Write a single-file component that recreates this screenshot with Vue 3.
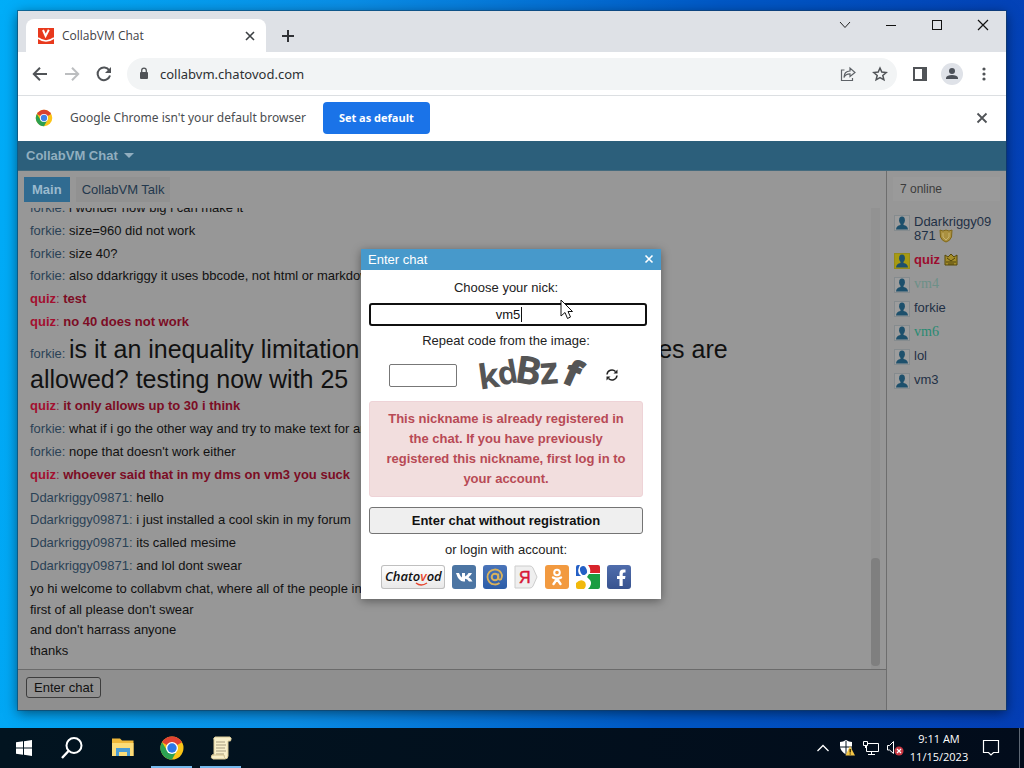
<script setup>
import { ref } from 'vue'

const nick = ref('vm5')
const code = ref('')

const messages = [
  { from: 'forkie', text: 'i wonder how big i can make it' },
  { from: 'forkie', text: 'size=960 did not work' },
  { from: 'forkie', text: 'size 40?' },
  { from: 'forkie', text: 'also ddarkriggy it uses bbcode, not html or markdown' },
  { from: 'quiz', text: 'test', red: true },
  { from: 'quiz', text: 'no 40 does not work', red: true },
  { from: 'forkie', text: 'is it an inequality limitation, or only some other big sizes are allowed? testing now with 25', big: true },
  { from: 'quiz', text: 'it only allows up to 30 i think', red: true },
  { from: 'forkie', text: 'what if i go the other way and try to make text for ants' },
  { from: 'forkie', text: "nope that doesn't work either" },
  { from: 'quiz', text: 'whoever said that in my dms on vm3 you suck', red: true },
  { from: 'Ddarkriggy09871', text: 'hello' },
  { from: 'Ddarkriggy09871', text: 'i just installed a cool skin in my forum' },
  { from: 'Ddarkriggy09871', text: 'its called mesime' },
  { from: 'Ddarkriggy09871', text: 'and lol dont swear' }
]

const notice = [
  'yo hi welcome to collabvm chat, where all of the people in',
  "first of all please don't swear",
  "and don't harrass anyone",
  'thanks'
]

const users = [
  { name: 'Ddarkriggy09871', badge: 'shield' },
  { name: 'quiz', kind: 'owner', badge: 'crown' },
  { name: 'vm4', kind: 'faint' },
  { name: 'forkie' },
  { name: 'vm6', kind: 'teal' },
  { name: 'lol' },
  { name: 'vm3' }
]
</script>

<template>
  <div class="screen">
    <main class="desktop">
      <section class="window">
        <header class="tabstrip">
          <div class="tab">
            <svg class="favicon" width="16" height="16" viewBox="0 0 16 16">
              <rect width="16" height="16" fill="#e8391d" />
              <path d="M5 2L7.600 8L10.800 1.800" fill="none" stroke="#fff" stroke-width="2" />
              <path d="M0 10Q8 16 16 10" fill="none" stroke="#fff" stroke-width="1.700" />
            </svg>
            <span class="tab-title">CollabVM Chat</span>
            <button class="plain tab-close" aria-label="Close tab">
              <svg width="10" height="10" viewBox="0 0 10 10"><path d="M1 1L9 9M9 1L1 9" stroke="#3c4043" stroke-width="1.600" /></svg>
            </button>
          </div>
          <button class="plain new-tab" aria-label="New tab">
            <svg width="14" height="14" viewBox="0 0 14 14"><path d="M7 1V13M1 7H13" stroke="#303236" stroke-width="2" /></svg>
          </button>
          <div class="controls">
            <button class="plain" aria-label="Search tabs"><svg width="12" height="12" viewBox="0 0 12 12"><path d="M1 3L6 8.500L11 3" fill="none" stroke="#222" /></svg></button>
            <button class="plain" aria-label="Minimize"><svg width="12" height="12" viewBox="0 0 12 12"><path d="M1 6.500H11" stroke="#111" /></svg></button>
            <button class="plain" aria-label="Maximize"><svg width="12" height="12" viewBox="0 0 12 12"><rect x="1.500" y="1.500" width="9" height="9" fill="none" stroke="#111" /></svg></button>
            <button class="plain" aria-label="Close"><svg width="12" height="12" viewBox="0 0 12 12"><path d="M1 1L11 11M11 1L1 11" stroke="#111" stroke-width="1.200" /></svg></button>
          </div>
        </header>

        <nav class="toolbar">
          <button class="plain tool" aria-label="Back"><svg width="16" height="16" viewBox="0 0 16 16"><path d="M15 8H2M8 1.800L1.800 8L8 14.200" fill="none" stroke="#505357" stroke-width="2" /></svg></button>
          <button class="plain tool" aria-label="Forward"><svg width="16" height="16" viewBox="0 0 16 16"><path d="M1 8H14M8 1.800L14.200 8L8 14.200" fill="none" stroke="#bcbec0" stroke-width="2" /></svg></button>
          <button class="plain tool" aria-label="Reload"><svg width="16" height="16" viewBox="0 0 16 16"><path d="M13.300 4.500A6.300 6.300 0 1 0 14 9.500" fill="none" stroke="#505357" stroke-width="2" /><path d="M15 1V7H9Z" fill="#505357" /></svg></button>
          <div class="omnibox">
            <svg class="lock" width="12" height="14" viewBox="0 0 12 14"><rect x="2" y="5" width="8" height="7" rx="1" fill="#505357" /><path d="M3.700 5V3.500a2.300 2.300 0 0 1 4.600 0V5" fill="none" stroke="#505357" stroke-width="1.300" /></svg>
            <input class="url" aria-label="Address" value="collabvm.chatovod.com">
            <button class="plain tool" aria-label="Share"><svg width="16" height="16" viewBox="0 0 16 16"><path d="M4.500 4H1.500V14.500H12.500V12" fill="none" stroke="#5f6368" stroke-width="1.200" /><path d="M4 11.500C4 7.500 6 5 10 5V2L15 6.500L10 10.500V7.800C7 7.800 5 9 4 11.500Z" fill="none" stroke="#5f6368" stroke-width="1.200" /></svg></button>
            <button class="plain tool" aria-label="Bookmark"><svg width="16" height="16" viewBox="0 0 16 16"><path d="M8 2L9.800 6.100L14.200 6.500L10.800 9.400L11.900 13.800L8 11.500L4.100 13.800L5.200 9.400L1.800 6.500L6.200 6.100Z" fill="none" stroke="#505357" stroke-width="1.500" /></svg></button>
          </div>
          <button class="plain tool" aria-label="Side panel"><svg width="16" height="16" viewBox="0 0 16 16"><path d="M1 1H15V15H1ZM3 3V13H10V3Z" fill="#505357" fill-rule="evenodd" /></svg></button>
          <button class="plain tool" aria-label="Profile"><svg width="24" height="24" viewBox="0 0 24 24"><circle cx="12" cy="12" r="11" fill="#dfe2e8" /><circle cx="12" cy="9" r="3" fill="#4b5058" /><path d="M6 17V15.500Q7 13 12 13T18 15.500V17Z" fill="#4b5058" /></svg></button>
          <button class="plain tool" aria-label="Menu"><svg width="16" height="16" viewBox="0 0 16 16" fill="#505357"><circle cx="8" cy="3" r="1.600" /><circle cx="8" cy="8" r="1.600" /><circle cx="8" cy="13" r="1.600" /></svg></button>
        </nav>

        <div class="infobar">
          <svg width="18" height="18" viewBox="0 0 24 24">
            <circle cx="12" cy="12" r="11" fill="#fbc417" />
            <path d="M12 12L2.500 6.500A11 11 0 0 1 21.500 6.500Z" fill="#d9412f" />
            <path d="M2.500 6.500A11 11 0 0 0 12 23L16.500 14.500L12 12L7.500 14.500Z" fill="#2c9f50" />
            <circle cx="12" cy="12" r="5.400" fill="#fff" /><circle cx="12" cy="12" r="4.200" fill="#4181e8" />
          </svg>
          <span class="info-text">Google Chrome isn't your default browser</span>
          <button class="default-btn">Set as default</button>
          <button class="plain tool info-close" aria-label="Dismiss"><svg width="12" height="12" viewBox="0 0 12 12"><path d="M1.500 1.500L10.500 10.500M10.500 1.500L1.500 10.500" stroke="#505357" stroke-width="1.800" /></svg></button>
        </div>

        <div class="page">
          <header class="page-head">
            <button class="plain room-menu">CollabVM Chat
              <svg width="10" height="6" viewBox="0 0 10 6"><path d="M0 0H10L5 5Z" fill="#91aebf" /></svg>
            </button>
          </header>
          <div class="page-body">
            <section class="chat">
              <div class="rooms">
                <button class="room active">Main</button>
                <button class="room">CollabVM Talk</button>
              </div>
              <div class="log">
                <div class="lines">
                  <p v-for="(m, i) in messages" :key="i" :class="{ red: m.red }">
                    <a href="#" class="nick">{{ m.from }}</a><span class="colon">: </span><span :class="{ big: m.big }">{{ m.text }}</span>
                  </p>
                  <p><template v-for="(line, i) in notice" :key="i"><br v-if="i">{{ line }}</template></p>
                </div>
                <div class="track"><div class="thumb"></div></div>
              </div>
              <footer class="entry"><button class="enter-btn">Enter chat</button></footer>
            </section>
            <aside class="people">
              <div class="online">7 online</div>
              <ul>
                <li v-for="u in users" :key="u.name" :class="u.kind">
                  <svg class="avatar" width="16" height="16" viewBox="0 0 16 16">
                    <rect class="frame" x="0.500" y="0.500" width="15" height="15" />
                    <ellipse cx="8" cy="5.300" rx="2.900" ry="3.700" fill="#1d506c" />
                    <path d="M2 14.500Q2.300 10.700 6.500 10V8H9.500V10Q13.700 10.700 14 14.500Z" fill="#1d506c" />
                  </svg>
                  <a href="#" class="user-name">{{ u.name }}
                    <svg v-if="u.badge === 'shield'" class="badge" width="14" height="14" viewBox="0 0 14 14"><path d="M1 1Q4 3 7 1Q10 3 13 1L12.500 8Q11 12 7 13Q3 12 1.500 8Z" fill="#aa9040" stroke="#806718" /><path d="M4 4V8L7 11L10 8V4" fill="none" stroke="#c7b26d" /></svg>
                    <svg v-if="u.badge === 'crown'" class="badge" width="14" height="14" viewBox="0 0 14 14"><path d="M1 2L4 4L7 1L10 4L13 2V12H1Z" fill="#a48d2b" stroke="#574909" /><path d="M2 9H12M3 5L7 8L11 5M4 11H10" stroke="#4f430c" fill="none" /></svg>
                  </a>
                </li>
              </ul>
            </aside>
          </div>

          <div class="overlay">
            <form class="dialog" @submit.prevent>
              <header class="dialog-head">
                <span>Enter chat</span>
                <button type="button" class="plain dialog-close" aria-label="Close dialog"><svg width="10" height="10" viewBox="0 0 10 10"><path d="M1.500 1.500L8.500 8.500M8.500 1.500L1.500 8.500" stroke="#fff" stroke-width="1.600" /></svg></button>
              </header>
              <div class="dialog-body">
                <label class="caption" for="nick">Choose your nick:</label>
                <div class="nick-wrap">
                  <input id="nick" v-model="nick" class="nick-input" autocomplete="off">
                  <span class="caret"></span>
                </div>
                <label class="caption code-caption" for="code">Repeat code from the image:</label>
                <div class="captcha">
                  <input id="code" v-model="code" class="code-input" autocomplete="off">
                  <svg class="captcha-image" width="116" height="38" viewBox="0 0 116 38" role="img" aria-label="Code image">
                    <g fill="#555" stroke="#555" font-family="Open Sans, sans-serif" font-weight="700">
                      <text x="4" y="33" font-size="34" stroke-width="0" transform="rotate(-8 8 33)">k</text>
                      <text x="22" y="28" font-size="32" stroke-width="0" transform="rotate(-10 31 20)">d</text>
                      <text x="39" y="28" font-size="39" stroke-width="0" transform="rotate(9 51 18)">B</text>
                      <text x="64" y="28" font-size="38" stroke-width="0" transform="rotate(-4 72 20)">z</text>
                      <text x="89" y="30" font-size="34" stroke-width="2" transform="rotate(24 98 20)">f</text>
                    </g>
                  </svg>
                  <button type="button" class="plain refresh" aria-label="New image">
                    <svg width="14" height="14" viewBox="0 0 14 14"><path d="M2 6.500A5 5 0 0 1 10.500 3.500M12 7.500A5 5 0 0 1 3.500 10.500" fill="none" stroke="#222" stroke-width="1.500" /><path d="M12.500 1.500V5.500H8.500ZM1.500 12.500V8.500H5.500Z" fill="#222" /></svg>
                  </button>
                </div>
                <p class="error">This nickname is already registered in the chat. If you have previously registered this nickname, first log in to your account.</p>
                <button type="submit" class="submit">Enter chat without registration</button>
                <div class="caption login-caption">or login with account:</div>
                <div class="providers">
                  <button type="button" class="provider wide" aria-label="Chatovod">
                    <svg width="64" height="24" viewBox="0 0 64 24">
                      <text x="4" y="16" font-family="Open Sans, sans-serif" font-size="13" font-weight="600" font-style="italic" fill="#111">Chato<tspan fill="#e5452e">v</tspan>od</text>
                      <path d="M35 18Q40 22 46 18" fill="none" stroke="#e5452e" stroke-width="1.500" />
                    </svg>
                  </button>
                  <button type="button" class="provider vk" aria-label="VK"><svg width="24" height="24" viewBox="0 0 24 24"><path d="M4 8H7Q8.500 12 10 12.500V8H13V11.500Q15 11 16.500 8H20Q19 10.500 16.500 12.300Q19 13.500 20.500 16.500H17Q15.500 14 13 13.700V16.500H11.500Q6.500 16.500 4 8Z" fill="#fff" /></svg></button>
                  <button type="button" class="provider mail" aria-label="Mail.ru"><svg width="24" height="24" viewBox="0 0 24 24"><circle cx="12" cy="12" r="3.300" fill="none" stroke="#d9b25c" stroke-width="2" /><path d="M15.300 8.500V13Q16 15.500 18 14.300Q20.500 9.500 16.500 6A7.500 7.500 0 1 0 16.500 18" fill="none" stroke="#d9b25c" stroke-width="1.800" /></svg></button>
                  <button type="button" class="provider yandex" aria-label="Yandex"><svg width="24" height="24" viewBox="0 0 24 24"><path d="M1 1H16Q18 1 19 3L23 12L19 21Q18 23 16 23H1Z" fill="#efefef" stroke="#cdcdcd" /><text x="5" y="18" font-family="Liberation Sans Narrow, Liberation Sans, sans-serif" font-size="16" fill="#d71635" stroke="#d71635" stroke-width="0.500">Я</text></svg></button>
                  <button type="button" class="provider ok" aria-label="Odnoklassniki"><svg width="24" height="24" viewBox="0 0 24 24" fill="none" stroke="#fff" stroke-width="2"><circle cx="12" cy="7.500" r="2.800" /><path d="M8 12.500Q12 15 16 12.500M12 14L8.500 19M12 14L15.500 19" stroke-width="2.400" stroke-linecap="round" /></svg></button>
                  <button type="button" class="provider google" aria-label="Google">
                    <svg width="24" height="24" viewBox="0 0 24 24"><rect width="24" height="24" rx="2" fill="#fff" /><path d="M0 2A2 2 0 0 1 2 0H4Q1 5 3 9L5 11H0Z" fill="#2460c6" /><path d="M12 0H22A2 2 0 0 1 24 2V8H14Q15 3 12 0Z" fill="#d8242b" /><path d="M13 9H24V22A2 2 0 0 1 22 24H12Q17 19 14 15L11 12Z" fill="#1b9d42" /><path d="M0 18Q5 13 9 17Q11 21 8 24H2A2 2 0 0 1 0 22Z" fill="#f1b90b" /><ellipse cx="7.500" cy="5.500" rx="3.300" ry="4.500" transform="rotate(-20 7.500 5.500)" fill="#2460c6" /></svg>
                  </button>
                  <button type="button" class="provider fb" aria-label="Facebook"><svg width="24" height="24" viewBox="0 0 24 24"><path d="M12.500 21V14H10V11H12.500V8.500Q12.500 4.500 16 4.500H18.500V7.500H17Q15.700 7.500 15.700 9V11H18.500L18 14H15.700V21Z" fill="#fff" /></svg></button>
                </div>
              </div>
              <svg class="pointer" width="14" height="22" viewBox="0 0 14 22"><path d="M1 1V17L5 13.500L7.500 19.500L10.500 18L8 12.500H12.500Z" fill="#fff" stroke="#111" /></svg>
            </form>
          </div>
        </div>
      </section>
    </main>

    <footer class="taskbar">
      <button class="plain task" aria-label="Start"><svg width="16" height="16" viewBox="0 0 16 16" fill="#fff"><path d="M0 2.300L7 1.300V7.500H0ZM8 1.200L16 0V7.500H8ZM0 8.500H7V14.700L0 13.700ZM8 8.500H16V16L8 14.800Z" /></svg></button>
      <button class="plain task" aria-label="Search"><svg width="24" height="24" viewBox="0 0 24 24" fill="none" stroke="#fff"><circle cx="14" cy="9.500" r="7.500" stroke-width="2" /><path d="M8.500 15L2 22" stroke-width="2.400" /></svg></button>
      <button class="plain task app" aria-label="File Explorer"><svg width="24" height="24" viewBox="0 0 24 24"><path d="M1 4V2.500H9L11 4.500H22.500V20H1Z" fill="#efb83a" /><path d="M1 7H22.500V20H1Z" fill="#fcdc78" /><path d="M5 20V12H19V20H16V16H8V20Z" fill="#4a9bd4" /></svg></button>
      <button class="plain task app open" aria-label="Google Chrome"><svg width="24" height="24" viewBox="0 0 24 24">
        <circle cx="12" cy="12" r="11.500" fill="#fbc417" />
        <path d="M12 12L2 6.200A11.500 11.500 0 0 1 22 6.200Z" fill="#e04232" />
        <path d="M2 6.200A11.500 11.500 0 0 0 12 23.500L17 14.500L12 12L7 14.500Z" fill="#2ca253" />
        <circle cx="12" cy="12" r="6" fill="#fff" /><circle cx="12" cy="12" r="4.700" fill="#2c78e8" /></svg></button>
      <button class="plain task app open" aria-label="Script"><svg width="24" height="24" viewBox="0 0 24 24"><path d="M6 1H21Q23 2 21.500 5H19V20Q19 23 16 23H4Q1 22 3 19H5V4Q4 2 6 1Z" fill="#f8efc9" stroke="#d8c997" /><path d="M7 6H16M7 9H17M7 12H16M7 15H17M7 18H15" stroke="#a79d80" /><path d="M3 19H15Q15 22 17 23" fill="none" stroke="#cfc08e" /></svg></button>
      <div class="tray">
        <button class="plain tray-btn" aria-label="Hidden icons"><svg width="14" height="14" viewBox="0 0 14 14"><path d="M1.500 10L7 4.500L12.500 10" fill="none" stroke="#fff" stroke-width="1.300" /></svg></button>
        <button class="plain tray-btn" aria-label="Security"><svg width="16" height="16" viewBox="0 0 16 16"><path d="M7 0Q10 2 13 2V7Q12 12 7 14.500Q2 12 1 7V2Q4 2 7 0Z" fill="#fff" /><path d="M7 1V14M1 7H13" stroke="#071421" /><path d="M11 6L16 15.500H6.500Z" fill="#f3c546" /><path d="M11.200 9V12.500M11.200 13.500V14.500" stroke="#292000" stroke-width="1.300" /></svg></button>
        <button class="plain tray-btn" aria-label="Network"><svg width="18" height="16" viewBox="0 0 18 16" fill="none" stroke="#fff"><path d="M5 3.500H16.500V11.500H4.500V6M1.500 1.500H5.500V5.500H1.500ZM3.500 5.500V8M9.500 11.500V14.500M6 14.500H13" /></svg></button>
        <button class="plain tray-btn" aria-label="Volume muted"><svg width="18" height="16" viewBox="0 0 18 16"><path d="M1.500 5.500H3.500L7.500 1.500V13.500L3.500 10H1.500Z" fill="none" stroke="#fff" /><circle cx="13" cy="11" r="4.500" fill="#c93742" /><path d="M11 9L15 13M15 9L11 13" stroke="#fff" stroke-width="1.200" /></svg></button>
        <div class="clock"><span>9:11 AM</span><span>11/15/2023</span></div>
        <button class="plain notify" aria-label="Notifications"><svg width="18" height="18" viewBox="0 0 18 18"><path d="M1.500 1.500H16.500V13.500H11.500L9 16L6.500 13.500H1.500Z" fill="none" stroke="#fff" stroke-width="1.200" /></svg></button>
      </div>
    </footer>
  </div>
</template>

<style>
body { margin: 0; }
</style>

<style scoped>
.screen {
  display: flex;
  flex-direction: column;
  height: 100vh;
  overflow: hidden;
  background: linear-gradient(95deg, #00adf8 0%, #0a8ee6 32%, #0058c6 66%, #043db4 100%);
  font-family: "Liberation Sans", Arial, sans-serif;
  font-size: 13px;
  color: #111;
}
.screen * { box-sizing: border-box; }
button, input { font: inherit; color: inherit; margin: 0; }
a { color: inherit; text-decoration: none; }
.plain {
  display: flex;
  align-items: center;
  justify-content: center;
  padding: 0;
  border: 0;
  background: none;
}
svg { flex: none; }
.desktop {
  display: flex;
  flex: 1;
  min-height: 0;
  padding: 11px 18px 18px;
}
.window {
  display: flex;
  flex: 1;
  min-width: 0;
  flex-direction: column;
  background: #fff;
  box-shadow: 0 0 0 1px #173c5c88, 0 3px 12px #0008;
}
.tabstrip {
  display: flex;
  height: 41px;
  padding-left: 8px;
  background: #dee1e6;
  font-family: "Open Sans", "Noto Sans", sans-serif;
  font-size: 12px;
}
.tab {
  display: flex;
  align-items: center;
  width: 240px;
  margin-top: 8px;
  padding: 0 10px 0 12px;
  border-radius: 8px 8px 0 0;
  background: #fff;
}
.tab-title { flex: 1; margin-left: 8px; color: #3f4246; }
.tab-close { width: 12px; height: 16px; }
.new-tab { width: 28px; margin: 8px 0 0 8px; }
.controls { display: flex; height: 28px; margin-left: auto; }
.controls button { width: 46px; }
.toolbar {
  display: flex;
  align-items: center;
  height: 44px;
  padding: 0 6px;
  border-bottom: 1px solid #dcdfe2;
}
.tool { width: 32px; height: 32px; flex: none; }
.omnibox {
  display: flex;
  flex: 1;
  align-items: center;
  min-width: 0;
  height: 32px;
  margin: 0 7px;
  padding: 0 1px 0 11px;
  border-radius: 16px;
  background: #f2f4f5;
}
.url {
  flex: 1;
  min-width: 0;
  margin-left: 10px;
  padding: 0;
  border: 0;
  outline: 0;
  background: none;
  color: #2d3033;
  font-family: "Noto Sans", "Open Sans", sans-serif;
  font-size: 13px;
}
.infobar {
  display: flex;
  align-items: center;
  height: 45px;
  padding: 0 8px 2px 17px;
  font-family: "Noto Sans", "Open Sans", sans-serif;
  font-size: 12px;
  color: #4a4d51;
}
.info-text { margin-left: 17px; }
.default-btn {
  height: 32px;
  margin-left: 17px;
  padding: 0 16px;
  border: 0;
  border-radius: 4px;
  background: #1a73e8;
  color: #fff;
  font-family: "Open Sans", "Noto Sans", sans-serif;
  font-size: 11px;
  font-weight: 700;
}
.info-close { margin-left: auto; }
.page {
  position: relative;
  display: flex;
  flex: 1;
  min-height: 0;
  flex-direction: column;
  background: #979797;
}
.page-head {
  display: flex;
  height: 30px;
  padding-left: 8px;
  border-bottom: 1px solid #456b7e;
  background: #2c5f7b;
}
.room-menu { gap: 6px; font-weight: 700; color: #91aebf; }
.page-body { display: flex; flex: 1; min-height: 0; }
.chat { display: flex; flex: 1; min-width: 0; flex-direction: column; }
.rooms { display: flex; gap: 6px; padding: 6px 6px 0; }
.room {
  height: 25px;
  padding: 0 6px;
  border: 0;
  background: #919191;
  color: #23384d;
}
.room.active { padding: 0 8px; background: #306b91; color: #9bbace; font-weight: 700; }
.log {
  display: flex;
  flex: 1;
  min-height: 0;
  justify-content: space-between;
  margin-top: 6px;
  padding-right: 6px;
  overflow: hidden;
}
.lines {
  display: flex;
  flex-direction: column;
  justify-content: flex-end;
  max-width: 760px;
  padding: 0 0 6px 12px;
  line-height: 1.6;
}
.lines p { margin: 0; padding: 1px 0; flex: none; }
.nick, .colon { color: #2b4256; }
.red, .red .nick { color: #7c0c24; font-weight: 700; }
.red .nick { color: #a30f2f; }
.red .colon { font-weight: 400; color: #7c3044; }
.big { font-size: 25px; line-height: 29px; }
.track {
  display: flex;
  align-items: flex-end;
  width: 9px;
  padding-bottom: 3px;
  background: #929292;
}
.thumb { width: 9px; height: 108px; border-radius: 4px; background: #7f7f7f; }
.entry {
  height: 41px;
  padding: 7px 8px;
  border-top: 1px solid #6b6b6b;
  background: #8f8f8f;
}
.enter-btn {
  height: 21px;
  padding: 0 7px;
  border: 1px solid #3d3d3d;
  border-radius: 3px;
  background: #929292;
}
.people { width: 120px; padding: 6px; border-left: 1px solid #6e6e6e; background: #979797; }
.online {
  height: 24px;
  padding-left: 7px;
  background: #9a9a9a;
  color: #3c3c3c;
  font-size: 12px;
  line-height: 24px;
}
.people ul { margin: 9px 0 0; padding: 0; list-style: none; }
.people li {
  display: flex;
  gap: 4px;
  padding: 5px 0 5px 1px;
  color: #1f3045;
  line-height: 14px;
}
.user-name { flex: 1; max-width: 80px; word-break: break-all; }
.avatar { margin: 0 0 -2px; }
.frame { fill: #9d9d9d; stroke: #858b8e; }
.owner .frame { fill: #a79a12; stroke: #968c18; }
.people .owner { color: #9c0d2e; font-weight: 700; }
.people .faint, .people .teal { font-family: "Liberation Serif", serif; font-size: 14px; }
.people .faint { color: #6d9088; }
.people .teal { color: #288a72; }
.badge { vertical-align: -3px; }
.overlay {
  position: absolute;
  inset: 0;
  display: grid;
  place-items: center;
  padding: 0 2px 4px 0;
}
.dialog {
  position: relative;
  width: 300px;
  background: #fff;
  box-shadow: 0 2px 9px #0006;
}
.dialog-head {
  display: flex;
  align-items: center;
  justify-content: space-between;
  height: 21px;
  padding: 0 7px;
  background: #4799cb;
  color: #fff;
}
.dialog-close { height: 21px; }
.dialog-body {
  display: flex;
  flex-direction: column;
  padding: 9px 18px 10px 8px;
  text-align: center;
}
.caption { height: 18px; line-height: 18px; color: #222; }
.nick-wrap { position: relative; margin: 6px -4px 0 0; }
.nick-input {
  display: block;
  width: 100%;
  height: 23px;
  padding: 0;
  border: 2px solid #101010;
  border-radius: 3px;
  outline: 0;
  background: #fff;
  text-align: center;
}
.caret { position: absolute; top: 4px; left: calc(50% + 13px); width: 1px; height: 15px; background: #111; }
.code-caption { margin-top: 6px; }
.captcha { display: flex; align-items: center; height: 43px; margin-top: 4px; padding-left: 20px; }
.code-input {
  width: 68px;
  height: 23px;
  padding: 0 4px;
  border: 1px solid #777;
  border-radius: 2px;
  background: #fff;
}
.captcha-image { margin: 0 10px 0 19px; }
.refresh { width: 20px; height: 20px; }
.error {
  margin: 4px 0 0;
  padding: 7px 15px;
  border: 1px solid #eed3d7;
  border-radius: 3px;
  background: #f2dede;
  color: #b84a55;
  font-weight: 700;
  line-height: 20px;
}
.submit {
  height: 27px;
  margin-top: 10px;
  border: 1px solid #747474;
  border-radius: 3px;
  background: #efefef;
  color: #111;
  font-weight: 700;
}
.login-caption { margin-top: 7px; }
.providers { display: flex; justify-content: center; gap: 7px; margin-top: 6px; }
.provider {
  display: flex;
  align-items: center;
  justify-content: center;
  width: 24px;
  height: 24px;
  padding: 0;
  border: 0;
  border-radius: 3px;
  background: none;
}
.wide { width: 64px; box-shadow: inset 0 0 0 1px #bfbfbf; background: linear-gradient(#fff, #e8e8e8); }
.vk { background: #4c75a3; }
.mail { background: linear-gradient(#4a74b8, #2c5da8); }
.ok { background: #f29a40; }
.fb { background: linear-gradient(#506dac, #37538f); }
.pointer { position: absolute; top: 50px; left: 199px; }
.taskbar {
  display: flex;
  align-items: stretch;
  height: 40px;
  background: linear-gradient(90deg, #021420, #020c1b);
  color: #fff;
}
.task { width: 48px; }
.app { width: 41px; margin-left: 8px; border-bottom: 2px solid transparent; border-top: 2px solid transparent; }
.app:nth-of-type(3) { margin-left: 6px; }
.open { border-bottom-color: #76b9ed; }
.tray {
  display: flex;
  align-items: center;
  margin-left: auto;
  margin-right: 4px;
  border-right: 1px solid #5e6874;
}
.tray-btn { width: 24px; height: 32px; }
.clock {
  display: flex;
  flex-direction: column;
  align-items: center;
  width: 64px;
  font-family: "Open Sans", "Noto Sans", sans-serif;
  font-size: 11px;
  line-height: 18px;
}
.notify { width: 40px; height: 32px; margin-right: 8px; }
</style>
